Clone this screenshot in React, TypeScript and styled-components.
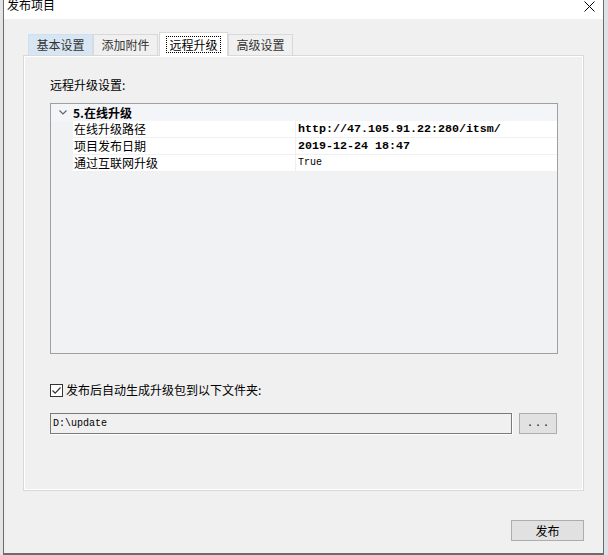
import React from "react";
import styled, { createGlobalStyle } from "styled-components";

const GlobalStyle = createGlobalStyle`
  html, body { margin: 0; padding: 0; background: #f0f0f0; }
  body {
    font-family: "Noto Sans CJK SC", "Noto Sans", sans-serif;
    font-size: 12px;
    color: #000;
  }
  #root { width: 608px; height: 555px; overflow: hidden; }
  * { box-sizing: border-box; }
`;

const Screen = styled.div`
  display: flex;
  width: 608px;
  height: 555px;
`;

const EdgeStrip = styled.div<{ $w: number; $bg: string }>`
  flex: 0 0 ${(p) => p.$w}px;
  background: ${(p) => p.$bg};
`;

const Window = styled.div`
  flex: 0 0 601px;
  height: 555px;
  display: flex;
  flex-direction: column;
  background: #f0f0f0;
  border-left: 1px solid #6b6b6b;
  border-right: 1px solid #6b6b6b;
  border-bottom: 2px solid #6b6b6b;
`;

const TitleBar = styled.div`
  height: 19px;
  flex: 0 0 19px;
  background: #fff;
  display: flex;
  justify-content: space-between;
  align-items: flex-start;
  padding: 0 8px 0 3px;
`;

const TitleText = styled.div`
  font-size: 12px;
  line-height: 12px;
  margin-top: -1px;
  color: #000;
`;

const CloseIcon = styled.svg`
  margin-top: 1px;
  width: 11px;
  height: 11px;
`;

const Client = styled.div`
  flex: 1;
  display: flex;
  flex-direction: column;
  padding: 13px 19px 0 19px;
`;

const TabStrip = styled.div`
  height: 23px;
  display: flex;
  align-items: flex-end;
  padding-left: 5px;
  position: relative;
  z-index: 2;
`;

const Tab = styled.div<{ $active?: boolean; $hover?: boolean }>`
  width: ${(p) => (p.$active ? 69 : 65)}px;
  height: ${(p) => (p.$active ? 24 : 21)}px;
  margin-left: ${(p) => (p.$active ? 1 : 0)}px;
  margin-bottom: ${(p) => (p.$active ? -1 : 0)}px;
  border: 1px solid ${(p) => (p.$hover ? "#cddff0" : "#d9d9d9")};
  border-bottom: none;
  background: ${(p) => (p.$active ? "#fff" : p.$hover ? "#d8e6f3" : "#f0f0f0")};
  display: flex;
  align-items: center;
  justify-content: center;
  padding-bottom: ${(p) => (p.$active ? 1 : 0)}px;
  color: ${(p) => (p.$active ? "#000" : "#333")};
  font-size: 12px;
  line-height: 14px;
`;

const FocusLabel = styled.span`
  border: 1px dotted #000;
  padding: 0 2px;
  line-height: 15px;
`;

const Panel = styled.div`
  height: 436px;
  border: 1px solid #d9d9d9;
  box-shadow: inset 1px 1px 0 #fff, inset -1px -1px 0 #fff;
  padding: 21px 25px 0 26px;
  display: flex;
  flex-direction: column;
`;

const SectionLabel = styled.div`
  line-height: 16px;
  height: 16px;
  margin-bottom: 10px;
`;

const PropGrid = styled.div`
  height: 251px;
  border: 1px solid #a0a0a0;
  background: #f1f2f4;
  display: flex;
  flex-direction: column;
`;

const CategoryRow = styled.div`
  height: 17px;
  display: grid;
  grid-template-columns: 22px 1fr;
  align-items: center;
  font-weight: bold;
  line-height: 17px;
  background: #f3f5f9;
`;

const Chevron = styled.svg`
  width: 8px;
  height: 5px;
  justify-self: center;
  margin-left: 1px;
`;

const PropRow = styled.div`
  height: 17px;
  display: grid;
  grid-template-columns: 22px 223px 1fr;
`;

const PropLabel = styled.div`
  background: #fff;
  border-bottom: 1px solid #f0f0f0;
  border-right: 1px solid #f0f0f0;
  padding-left: 1px;
  line-height: 16px;
`;

const PropValue = styled.div<{ $bold?: boolean }>`
  background: #fff;
  border-bottom: 1px solid #f0f0f0;
  padding-left: 2px;
  font-family: "Liberation Mono", "DejaVu Sans Mono", monospace;
  font-size: ${(p) => (p.$bold ? "11.67px" : "10px")};
  font-weight: ${(p) => (p.$bold ? "bold" : "normal")};
  line-height: 16px;
  white-space: nowrap;
`;

const CheckRow = styled.label`
  margin-top: 28px;
  height: 16px;
  display: flex;
  align-items: center;
  gap: 3px;
  line-height: 16px;
`;

const CheckBox = styled.span`
  width: 13px;
  height: 13px;
  border: 1px solid #333;
  background: #fff;
  display: flex;
  align-items: center;
  justify-content: center;
`;

const PathRow = styled.div`
  margin-top: 15px;
  display: flex;
  gap: 7px;
`;

const TextBox = styled.div`
  width: 462px;
  height: 21px;
  border: 1px solid #7a7a7a;
  box-shadow: 1px 1px 0 #fff;
  background: #f0f0f0;
  padding-left: 2px;
  font-family: "Liberation Mono", "DejaVu Sans Mono", monospace;
  font-size: 10px;
  line-height: 19px;
`;

const Button = styled.div<{ $w: number }>`
  width: ${(p) => p.$w}px;
  height: 21px;
  background: #e1e1e1;
  border: 1px solid #adadad;
  display: flex;
  align-items: center;
  justify-content: center;
  font-size: 12px;
  line-height: 14px;
`;

const Dots = styled.span`
  font-family: "Liberation Mono", monospace;
  font-size: 10px;
  letter-spacing: 2px;
  margin-left: 2px;
`;

const Footer = styled.div`
  margin-top: 29px;
  display: flex;
  justify-content: flex-end;
`;

export default function App() {
  return (
    <>
      <GlobalStyle />
      <Screen>
        <EdgeStrip $w={3} $bg="#e4e4e4" />
        <Window>
          <TitleBar>
            <TitleText>发布项目</TitleText>
            <CloseIcon viewBox="0 0 11 11">
              <path d="M0.5 0.5 L10.5 10.5 M10.5 0.5 L0.5 10.5" stroke="#000" strokeWidth="1" fill="none" />
            </CloseIcon>
          </TitleBar>
          <Client>
            <TabStrip>
              <Tab $hover>基本设置</Tab>
              <Tab>添加附件</Tab>
              <Tab $active>
                <FocusLabel>远程升级</FocusLabel>
              </Tab>
              <Tab>高级设置</Tab>
            </TabStrip>
            <Panel>
              <SectionLabel>远程升级设置:</SectionLabel>
              <PropGrid>
                <CategoryRow>
                  <Chevron viewBox="0 0 8 5">
                    <path d="M0.5 0.5 L4 4 L7.5 0.5" stroke="#606060" strokeWidth="1.1" fill="none" />
                  </Chevron>
                  <span>5.在线升级</span>
                </CategoryRow>
                <PropRow>
                  <span />
                  <PropLabel>在线升级路径</PropLabel>
                  <PropValue $bold>http://47.105.91.22:280/itsm/</PropValue>
                </PropRow>
                <PropRow>
                  <span />
                  <PropLabel>项目发布日期</PropLabel>
                  <PropValue $bold>2019-12-24 18:47</PropValue>
                </PropRow>
                <PropRow>
                  <span />
                  <PropLabel>通过互联网升级</PropLabel>
                  <PropValue>True</PropValue>
                </PropRow>
              </PropGrid>
              <CheckRow>
                <CheckBox>
                  <svg width="11" height="11" viewBox="0 0 11 11">
                    <path d="M1.5 5.5 L4.2 8.2 L9.5 2.5" stroke="#333" strokeWidth="1.2" fill="none" />
                  </svg>
                </CheckBox>
                <span>发布后自动生成升级包到以下文件夹:</span>
              </CheckRow>
              <PathRow>
                <TextBox>D:\update</TextBox>
                <Button $w={38}>
                  <Dots>...</Dots>
                </Button>
              </PathRow>
            </Panel>
            <Footer>
              <Button $w={73}>发布</Button>
            </Footer>
          </Client>
        </Window>
        <EdgeStrip $w={4} $bg="#dde2e8" />
      </Screen>
    </>
  );
}
